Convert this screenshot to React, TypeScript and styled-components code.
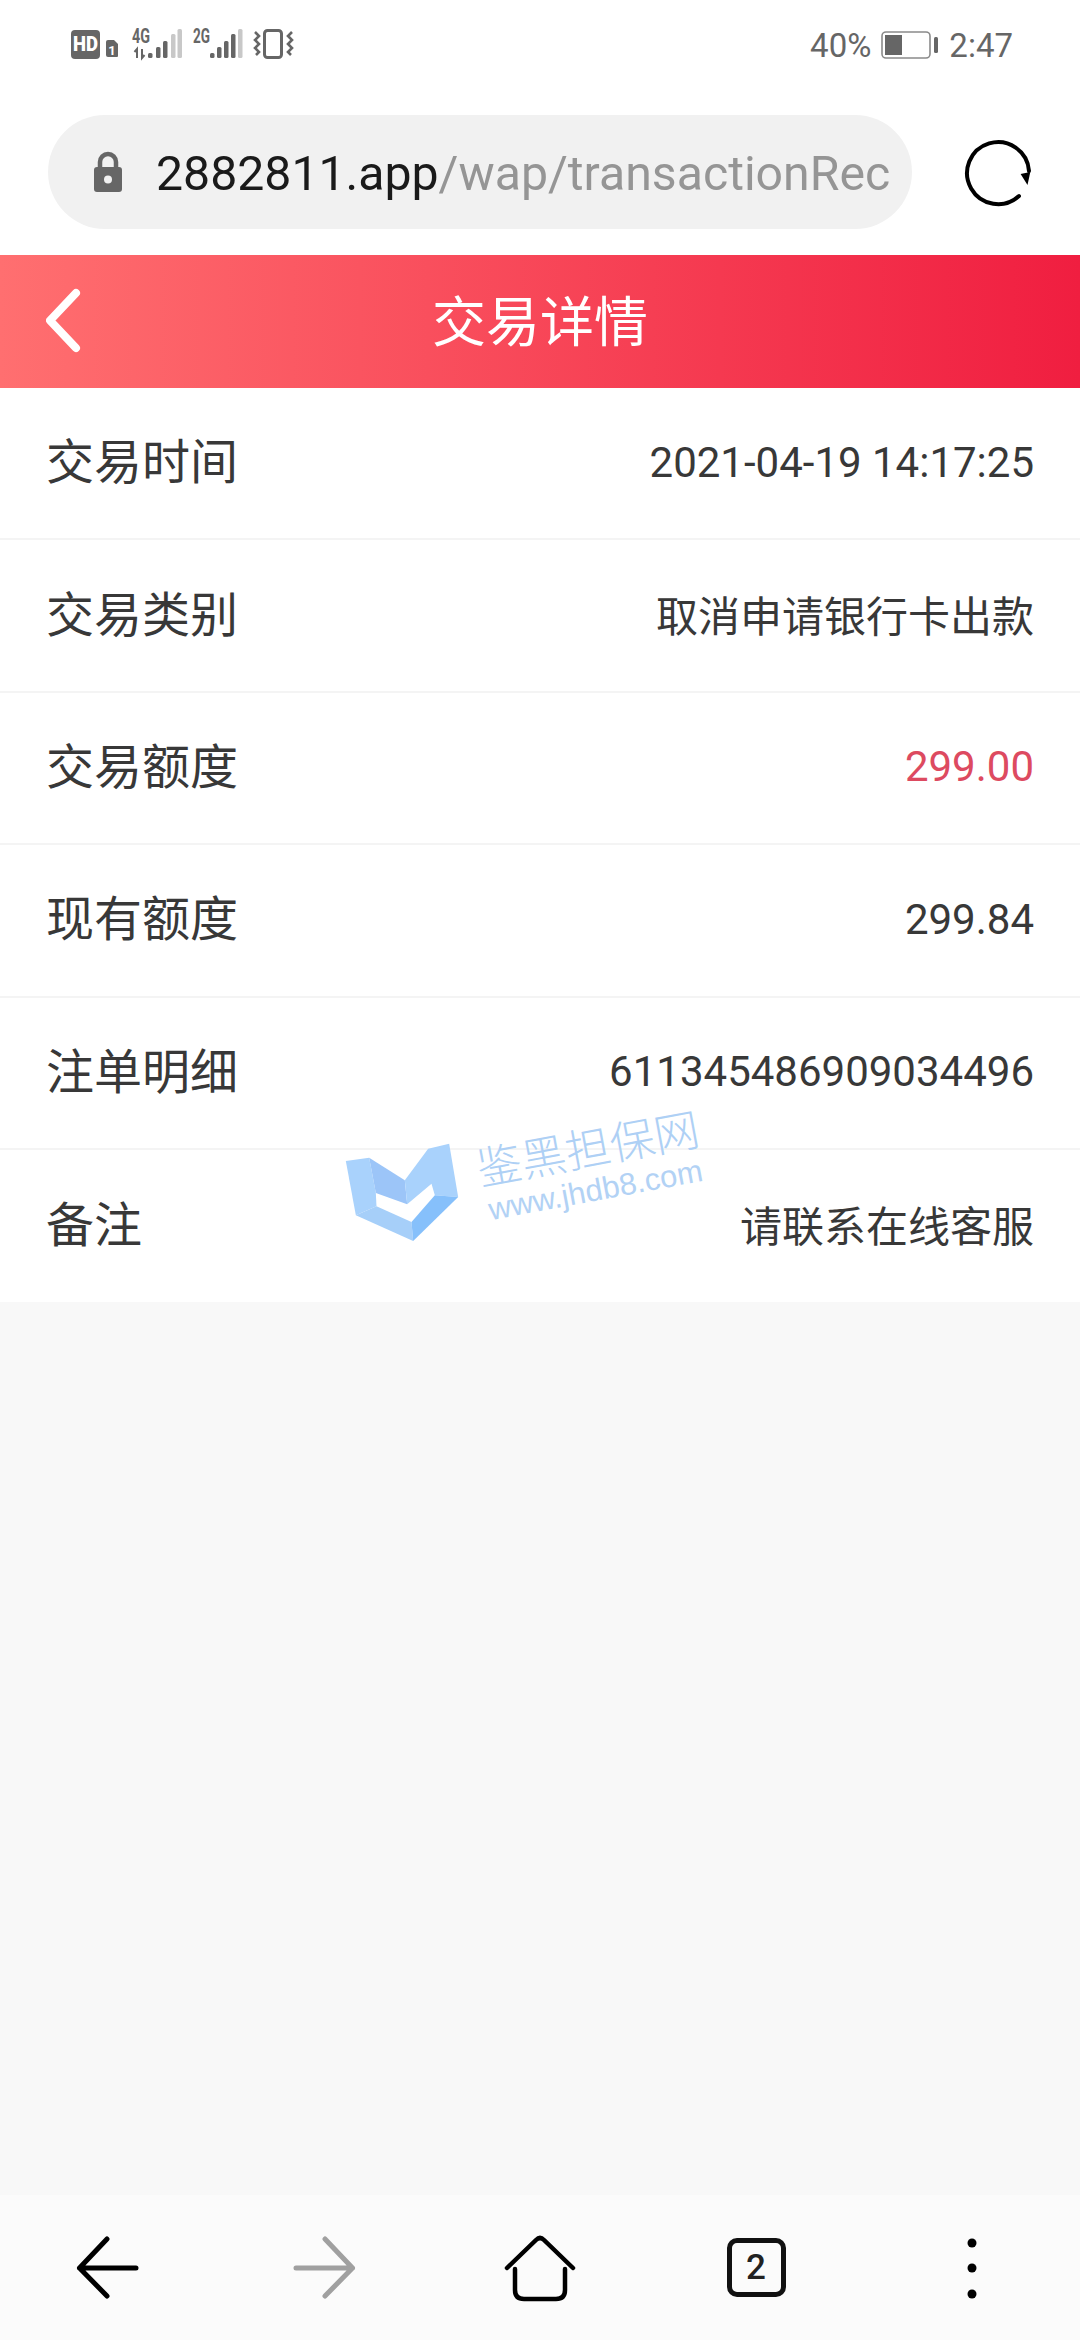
import React from "react";
import styled, { createGlobalStyle } from "styled-components";

const Global = createGlobalStyle`
  html, body { margin: 0; padding: 0; background: #f8f8f8; }
  body { font-family: Roboto, "Noto Sans CJK SC", sans-serif; }
`;

const Page = styled.div`
  position: relative;
  width: 1080px;
  height: 2340px;
  display: flex;
  flex-direction: column;
  overflow: hidden;
  background: #f8f8f8;
`;

const StatusBar = styled.div`
  height: 90px;
  background: #fff;
  display: flex;
  align-items: center;
  justify-content: space-between;
  padding: 0 67px 0 60px;
`;

const StatusRight = styled.div`
  display: flex;
  align-items: center;
  font-size: 33px;
  color: #666;
`;

const Battery = styled.svg`
  margin: 0 10px 0 10px;
  display: block;
`;

const BrowserBar = styled.div`
  height: 165px;
  background: #fff;
  display: flex;
  align-items: center;
  padding: 0 42px 0 48px;
  justify-content: space-between;
  box-sizing: border-box;
`;

const UrlPill = styled.div`
  width: 864px;
  height: 114px;
  border-radius: 57px;
  background: #f1f1f1;
  display: flex;
  align-items: center;
  padding-left: 45px;
  box-sizing: border-box;
  gap: 33px;
  margin-top: -1px;
`;

const UrlText = styled.div`
  font-size: 48.2px;
  color: #959595;
  white-space: nowrap;
  padding-top: 2px;
`;

const UrlHost = styled.span`
  color: #1a1a1a;
`;

const TitleBar = styled.div`
  position: relative;
  height: 133px;
  display: flex;
  align-items: center;
  justify-content: center;
  background: linear-gradient(90deg, #ff6f70 0%, #f01e40 100%);
`;

const BackChevron = styled.svg`
  position: absolute;
  left: 46px;
  top: 33px;
`;

const Title = styled.h1`
  margin: 0;
  padding-bottom: 6px;
  font-family: "Noto Sans CJK SC", sans-serif;
  font-size: 54px;
  font-weight: 400;
  color: #fff;
`;

const List = styled.div`
  background: #fff;
`;

const Row = styled.div`
  height: 152.4px;
  box-sizing: border-box;
  display: flex;
  align-items: center;
  justify-content: space-between;
  padding: 0 46px;
  border-bottom: 2px solid #f4f4f4;
  &:last-child { border-bottom: none; }
`;

const Label = styled.span`
  font-family: "Noto Sans CJK SC", sans-serif;
  font-size: 48px;
  color: #383838;
  padding-bottom: 10px;
`;

const Value = styled.span<{ $red?: boolean; $cjk?: boolean }>`
  font-family: Roboto, "Noto Sans CJK SC", sans-serif;
  font-size: 42px;
  padding-bottom: ${(p) => (p.$cjk ? "5px" : "2px")};
  color: ${(p) => (p.$red ? "#dd4a60" : "#383838")};
`;

const Spacer = styled.div`
  flex: 1;
`;

const BottomNav = styled.nav`
  height: 145px;
  background: #fbfbfb;
  display: grid;
  grid-template-columns: repeat(5, 216px);
  justify-content: center;
  justify-items: center;
  align-items: center;
  padding-bottom: 0;
`;

const NavIcon = styled.svg`
  display: block;
`;

const TabsButton = styled.div`
  width: 59px;
  height: 59px;
  box-sizing: border-box;
  border: 5px solid #111;
  border-radius: 10px;
  display: flex;
  align-items: center;
  justify-content: center;
  font-size: 35px;
  font-weight: 500;
  color: #222;
`;

const Watermark = styled.div`
  position: absolute;
  left: 343px;
  top: 1105px;
  display: flex;
  align-items: flex-start;
  gap: 18px;
  pointer-events: none;
`;

const WatermarkLogo = styled.svg`
  display: block;
  margin-top: 37px;
`;

const WatermarkText = styled.div`
  display: flex;
  flex-direction: column;
  align-items: center;
  transform: rotate(-10.5deg);
  margin-top: 13px;
`;

const WatermarkName = styled.div`
  font-family: "Noto Sans CJK SC", sans-serif;
  font-size: 45px;
  line-height: 56px;
  font-weight: 300;
  color: #aed0f5;
`;

const WatermarkUrl = styled.div`
  font-family: "Liberation Sans", sans-serif;
  font-size: 31px;
  line-height: 34px;
  color: #b2d2f5;
`;

const rows = [
  { label: "交易时间", value: "2021-04-19 14:17:25" },
  { label: "交易类别", value: "取消申请银行卡出款", cjk: true },
  { label: "交易额度", value: "299.00", red: true },
  { label: "现有额度", value: "299.84" },
  { label: "注单明细", value: "611345486909034496" },
  { label: "备注", value: "请联系在线客服", cjk: true },
];

function StatusIcons() {
  const dark = "#666";
  const faint = "#c8c8c8";
  const bar = (x: number, y: number, c: string, w = 4.5) => (
    <rect x={x} y={y} width={w} height={58 - y} rx={1.5} fill={c} />
  );
  return (
    <svg width={240} height={50} viewBox="60 20 240 50">
      <rect x={71} y={30} width={29} height={29} rx={4} fill={dark} />
      <text x={85.5} y={51} textAnchor="middle" fontFamily="Roboto" fontWeight={900} fontSize={20} textLength={25} lengthAdjust="spacingAndGlyphs" fill="#fff">HD</text>
      <path d="M108 40h6l4 4v12a1 1 0 0 1-1 1h-9a2 2 0 0 1-2-2V42a2 2 0 0 1 2-2z" fill={dark} />
      <text x={112} y={55} textAnchor="middle" fontFamily="Roboto" fontWeight={700} fontSize={13} fill="#fff">1</text>

      <text x={132} y={43} fontFamily="Roboto" fontWeight={700} fontSize={21} textLength={18} lengthAdjust="spacingAndGlyphs" fill={dark}>4G</text>
      <path d="M137 58v-9l-2.5 3M142 49v9l2.5-3" stroke={dark} strokeWidth={2} fill="none" />
      <rect x={148} y={53} width={4.5} height={5} rx={1.5} fill={dark} />
      {bar(156, 47, dark)}
      {bar(163, 41, dark)}
      {bar(171, 34, faint)}
      {bar(177.5, 29, faint)}

      <text x={193} y={43} fontFamily="Roboto" fontWeight={700} fontSize={21} textLength={17} lengthAdjust="spacingAndGlyphs" fill={dark}>2G</text>
      <rect x={210} y={53} width={4.5} height={5} rx={1.5} fill={dark} />
      {bar(217, 47, dark)}
      {bar(224, 41, dark)}
      {bar(231, 34, dark)}
      {bar(238, 29, faint)}

      <rect x={264.5} y={30.5} width={17} height={27} rx={3} fill="none" stroke={dark} strokeWidth={3} />
      <path d="M255 32l4 4-4 4 4 4-4 4 4 4-3 3" fill="none" stroke={dark} strokeWidth={2.6} />
      <path d="M292 32l-4 4 4 4-4 4 4 4-4 4 3 3" fill="none" stroke={dark} strokeWidth={2.6} />
    </svg>
  );
}

export default function App() {
  return (
    <Page>
      <Global />
      <StatusBar>
        <StatusIcons />
        <StatusRight>
          <span>40%</span>
          <Battery width={58} height={28} viewBox="0 0 58 28">
            <rect x={1} y={1} width={48} height={26} rx={4} fill="none" stroke="#8a8a8a" strokeWidth={1.6} />
            <rect x={4} y={4} width={17} height={20} fill="#666" />
            <rect x={53} y={6} width={4} height={16} rx={1.5} fill="#666" />
          </Battery>
          <span>2:47</span>
        </StatusRight>
      </StatusBar>

      <BrowserBar>
        <UrlPill>
          <svg width={30} height={42} viewBox="0 0 30 42">
            <path d="M7 18v-7a8 8 0 0 1 16 0v7" fill="none" stroke="#666" strokeWidth={4.5} />
            <rect x={1} y={16} width={28} height={25} rx={3} fill="#666" />
            <circle cx={15} cy={28.5} r={4} fill="#f1f1f1" />
          </svg>
          <UrlText>
            <UrlHost>2882811.app</UrlHost>/wap/transactionRec
          </UrlText>
        </UrlPill>
        <svg width={80} height={80} viewBox="0 0 80 80">
          <path d="M61 63A31 31 0 1 1 71 38" fill="none" stroke="#000" strokeWidth={4} strokeLinecap="round" />
          <path d="M62.6 41L72.3 39L69.5 52Z" fill="#000" />
        </svg>
      </BrowserBar>

      <TitleBar>
        <BackChevron width={40} height={68} viewBox="0 0 40 68">
          <path d="M30 5L4 32.5L30 60" fill="none" stroke="#fff" strokeWidth={8} strokeLinecap="round" strokeLinejoin="round" />
        </BackChevron>
        <Title>交易详情</Title>
      </TitleBar>

      <List>
        {rows.map((r) => (
          <Row key={r.label}>
            <Label>{r.label}</Label>
            <Value $red={r.red} $cjk={r.cjk}>{r.value}</Value>
          </Row>
        ))}
      </List>

      <Spacer />

      <BottomNav>
        <NavIcon width={66} height={64} viewBox="0 0 66 64">
          <path d="M32 3L4.5 32L32 60M4.5 32H61" fill="none" stroke="#000" strokeWidth={5} strokeLinecap="round" strokeLinejoin="round" />
        </NavIcon>
        <NavIcon width={66} height={64} viewBox="0 0 66 64">
          <path d="M34 3L61.5 32L34 60M61.5 32H5" fill="none" stroke="#a0a0a0" strokeWidth={5} strokeLinecap="round" strokeLinejoin="round" />
        </NavIcon>
        <NavIcon width={72} height={68} viewBox="0 0 72 68">
          <path d="M3 34L32 6Q36 2 40 6L69 34" fill="none" stroke="#000" strokeWidth={4.5} strokeLinecap="round" />
          <path d="M11 35V56Q11 65 20 65H52Q61 65 61 56V35" fill="none" stroke="#000" strokeWidth={4.5} strokeLinecap="round" />
        </NavIcon>
        <TabsButton>2</TabsButton>
        <NavIcon width={12} height={68} viewBox="0 0 12 68">
          <circle cx={6} cy={9} r={4.5} fill="#000" />
          <circle cx={6} cy={34} r={4.5} fill="#000" />
          <circle cx={6} cy={60} r={4.5} fill="#000" />
        </NavIcon>
      </BottomNav>

      <Watermark>
        <WatermarkLogo width={117} height={100} viewBox="70 125 350 300">
          <path d="M78 182L148 172L168 278L170 318L108 345Z" fill="#a9d2fc" />
          <path d="M148 172L255 240L262 312L168 278Z" fill="#9cc5f8" />
          <path d="M255 240L325 145L388 130L415 290L345 285L335 250L262 312Z" fill="#a9d2fc" />
          <path d="M108 345L170 318L275 365L280 422Z" fill="#a6cff9" />
          <path d="M275 365L345 285L415 290L280 422Z" fill="#86c0fb" />
        </WatermarkLogo>
        <WatermarkText>
          <WatermarkName>鉴黑担保网</WatermarkName>
          <WatermarkUrl>www.jhdb8.com</WatermarkUrl>
        </WatermarkText>
      </Watermark>
    </Page>
  );
}
